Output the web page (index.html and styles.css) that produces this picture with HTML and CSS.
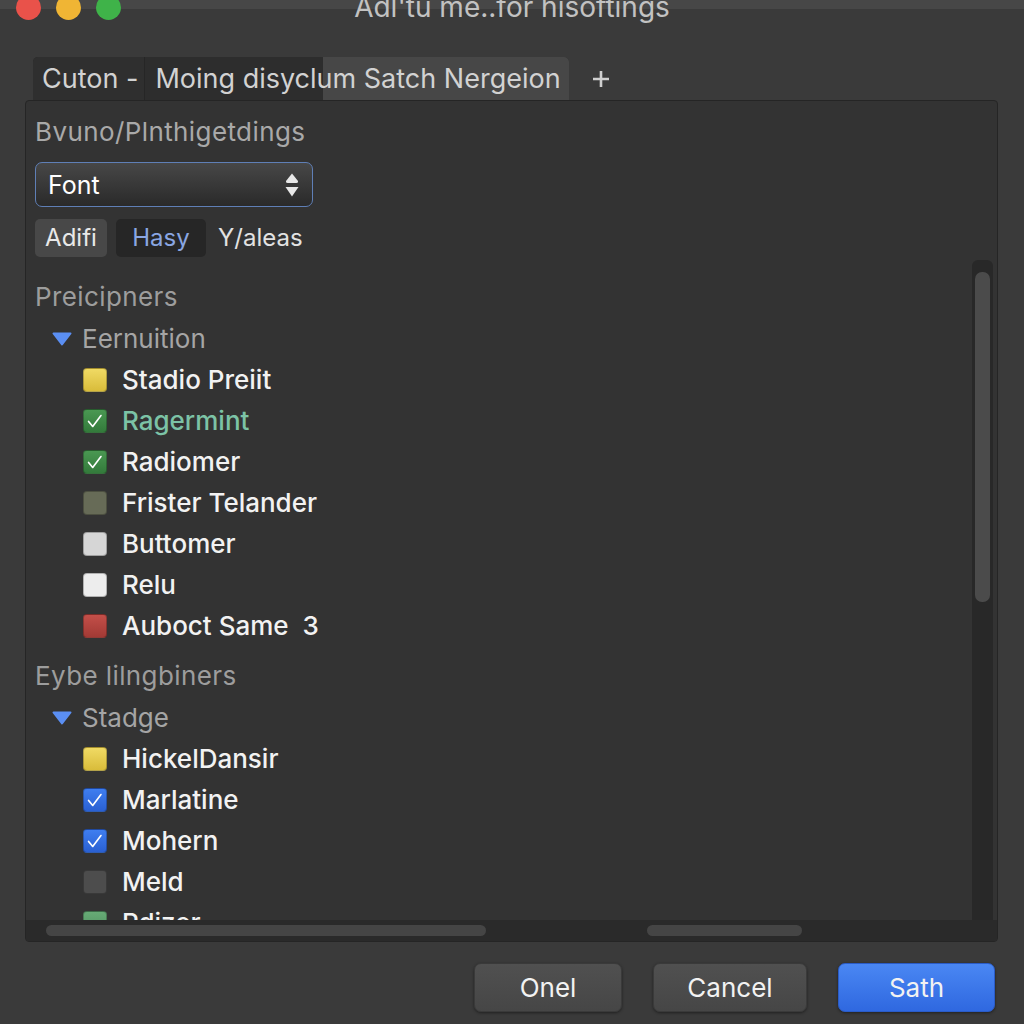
FILE: index.html
```html
<!DOCTYPE html>
<html lang="en">
<head>
  <meta charset="UTF-8" />
  <meta name="viewport" content="width=device-width, initial-scale=1" />
  <title>Settings</title>
  <link rel="stylesheet" href="styles.css">
</head>
<body>
<div class="window">

  <header class="titlebar">
    <div class="lights">
      <span class="light red"></span>
      <span class="light yellow"></span>
      <span class="light green"></span>
    </div>
    <div class="title">Adl'tu me..for hisoftings</div>
    <div></div>
  </header>

  <nav class="tabs">
    <div class="tab-group">
      <div class="tab">Cuton -</div>
      <div class="tab split">Moing disyclum Satch Nergeion</div>
    </div>
    <button class="add-tab" aria-label="New tab">
      <svg width="20" height="20" viewBox="0 0 20 20"><path d="M10 2v16M2 10h16" stroke="#cfcfcf" stroke-width="2.6"/></svg>
    </button>
  </nav>

  <section class="panel">
    <div class="panel-body">
      <h2 class="group-title">Bvuno/Plnthigetdings</h2>

      <div class="select">
        <span>Font</span>
        <svg width="16" height="26" viewBox="0 0 16 26">
          <path d="M8 1.5 L14 9 Q14.5 11 12.5 11 L3.5 11 Q1.5 11 2 9 Z" fill="#e8e8e8"/>
          <path d="M1.5 15 L14.5 15 L8 24.5 Z" fill="#e8e8e8"/>
        </svg>
      </div>

      <div class="segments">
        <span class="seg seg-on">Adifi</span>
        <span class="seg seg-dark">Hasy</span>
        <span class="seg seg-plain">Y/aleas</span>
      </div>

      <div class="list-area">
        <div class="list">
          <div class="section-title">Preicipners</div>
          <div class="tree-row">
            <svg width="20" height="14" viewBox="0 0 20 14"><polygon points="1.5,1.5 18.5,1.5 10,12.5" fill="#5b8ff3" stroke="#5b8ff3" stroke-width="2" stroke-linejoin="round"/></svg>
            <span>Eernuition</span>
          </div>
          <div class="item"><span class="box yellow"></span>Stadio Preiit</div>
          <div class="item mint"><span class="box green"><svg viewBox="0 0 24 24"><path d="M5 12.5l4.5 5.5 9-12"/></svg></span>Ragermint</div>
          <div class="item"><span class="box green"><svg viewBox="0 0 24 24"><path d="M5 12.5l4.5 5.5 9-12"/></svg></span>Radiomer</div>
          <div class="item"><span class="box olive"></span>Frister Telander</div>
          <div class="item"><span class="box light"></span>Buttomer</div>
          <div class="item"><span class="box white"></span>Relu</div>
          <div class="item"><span class="box red"></span>Auboct Same&nbsp; 3</div>

          <div class="section-title second">Eybe lilngbiners</div>
          <div class="tree-row">
            <svg width="20" height="14" viewBox="0 0 20 14"><polygon points="1.5,1.5 18.5,1.5 10,12.5" fill="#5b8ff3" stroke="#5b8ff3" stroke-width="2" stroke-linejoin="round"/></svg>
            <span>Stadge</span>
          </div>
          <div class="item"><span class="box yellow"></span>HickelDansir</div>
          <div class="item"><span class="box blue"><svg viewBox="0 0 24 24"><path d="M5 12.5l4.5 5.5 9-12"/></svg></span>Marlatine</div>
          <div class="item"><span class="box blue"><svg viewBox="0 0 24 24"><path d="M5 12.5l4.5 5.5 9-12"/></svg></span>Mohern</div>
          <div class="item"><span class="box dark"></span>Meld</div>
          <div class="item"><span class="box leaf"></span>Rdizer</div>
        </div>
        <div class="vscroll"><div class="vthumb"></div></div>
      </div>
    </div>

    <div class="hscroll">
      <div class="hthumb first"></div>
      <div class="hthumb second"></div>
    </div>
  </section>

  <footer class="actions">
    <button class="btn btn-one">Onel</button>
    <button class="btn btn-cancel">Cancel</button>
    <button class="btn btn-primary">Sath</button>
  </footer>

</div>
</body>
</html>
```

FILE: styles.css
```css
body {
  margin: 0;
  background: linear-gradient(#474747 0, #474747 9px, #3a3a3a 9px);
  color: #f0f0f0;
  font-family: 'Inter', 'Noto Sans', sans-serif;
}

.window {
  height: 1024px;
  overflow: hidden;
}

/* title bar */
.titlebar {
  display: grid;
  grid-template-columns: 1fr auto 1fr;
  align-items: center;
  height: 26px;
  margin-top: -6px;
}

.lights {
  display: flex;
  gap: 15px;
  padding-left: 16px;
}

.light {
  width: 25px;
  height: 25px;
  border-radius: 50%;
}

.light.red { background: #e9524a; }
.light.yellow { background: #f0b534; }
.light.green { background: #3fb349; }

.title {
  margin-top: 0;
  font-size: 28px;
  line-height: 26px;
  color: #c2c2c2;
}

/* tabs */
.tabs {
  display: flex;
  align-items: center;
  margin: 37px 0 0 33px;
  height: 43px;
}

.tab-group {
  display: flex;
  height: 43px;
  border-radius: 5px 5px 0 0;
  overflow: hidden;
  box-shadow: inset 0 1px 0 #262626;
}

.tab {
  padding: 0 6px 0 9px;
  font-size: 27px;
  line-height: 43px;
  color: #d2d2d2;
  background: #2f2f2f;
  border-right: 1px solid #262626;
}

.tab.split {
  padding: 0 8px 0 10px;
  background: linear-gradient(to right, #2d2d2d 178px, #474747 178px);
  border-right: none;
}

.add-tab {
  display: flex;
  background: none;
  border: none;
  padding: 0;
  margin-left: 22px;
}

/* main panel */
.panel {
  margin: 0 26px 0 25px;
  height: 840px;
  background: #333333;
  border: 1px solid #252525;
  border-radius: 4px;
  display: flex;
  flex-direction: column;
  overflow: hidden;
}

.panel-body {
  flex: 1;
  display: flex;
  flex-direction: column;
  padding: 13px 4px 0 9px;
  min-height: 0;
}

.group-title {
  margin: 0;
  font-size: 26px;
  font-weight: 400;
  letter-spacing: 0.4px;
  line-height: 36px;
  color: #a9a9a9;
}

.select {
  margin-top: 12px;
  width: 278px;
  height: 45px;
  box-sizing: border-box;
  display: flex;
  align-items: center;
  justify-content: space-between;
  padding: 0 12px 0 12px;
  border: 1.5px solid #5f7fb6;
  border-radius: 7px;
  background: linear-gradient(#474747, #2a2a2a);
  font-size: 25px;
  color: #ffffff;
}

.segments {
  display: flex;
  align-items: center;
  gap: 9px;
  margin-top: 12px;
  height: 38px;
}

.seg {
  height: 38px;
  line-height: 38px;
  font-size: 24px;
  border-radius: 5px;
}

.seg-on {
  width: 72px;
  text-align: center;
  background: #484848;
  color: #e8e8e8;
}

.seg-dark {
  width: 90px;
  text-align: center;
  background: #262626;
  color: #8aa6e2;
}

.seg-plain {
  margin-left: 3px;
  color: #e2e2e2;
}

/* scrolling list */
.list-area {
  flex: 1;
  display: flex;
  margin-top: 1px;
  min-height: 0;
}

.list {
  flex: 1;
  padding-top: 18px;
  overflow: hidden;
}

.section-title {
  font-size: 26px;
  letter-spacing: 0.4px;
  line-height: 42px;
  color: #9d9d9d;
}

.section-title.second {
  margin-top: 9px;
}

.tree-row {
  display: flex;
  align-items: center;
  gap: 10px;
  height: 41px;
  padding-left: 17px;
  font-size: 26px;
  color: #a5a5a5;
}

.item {
  display: flex;
  align-items: center;
  gap: 15px;
  height: 41px;
  padding-left: 48px;
  font-size: 26px;
  font-weight: 500;
  color: #f2f2f2;
}

.item.mint {
  color: #7cc3a6;
}

.box {
  width: 24px;
  height: 24px;
  box-sizing: border-box;
  border-radius: 4px;
  border: 1px solid rgba(0,0,0,0.25);
  display: flex;
  flex-shrink: 0;
}

.box svg {
  width: 22px;
  height: 22px;
  fill: none;
  stroke: #ffffff;
  stroke-width: 1.8;
  stroke-linecap: round;
  stroke-linejoin: round;
}

.box.yellow { background: linear-gradient(#f0da64, #d9bc3a); }
.box.green { background: linear-gradient(#4a9852, #337a3b); }
.box.olive { background: #676b57; }
.box.light { background: #d6d6d6; }
.box.white { background: #ededed; }
.box.red { background: linear-gradient(#c34f49, #a23a35); }
.box.blue { background: linear-gradient(#3f7ef0, #2a60d2); }
.box.dark { background: #4d4d4d; }
.box.leaf { background: linear-gradient(#67ab76, #4f8f5f); }

.vscroll {
  width: 21px;
  margin-top: 2px;
  background: #282828;
  border-radius: 6px 6px 0 0;
  padding: 12px 3px 0 3px;
  box-sizing: border-box;
}

.vthumb {
  height: 330px;
  border-radius: 7px;
  background: #4b4b4b;
}

.hscroll {
  display: flex;
  height: 21px;
  padding-top: 5px;
  box-sizing: border-box;
  background: #2a2a2a;
}

.hthumb {
  height: 11px;
  border-radius: 6px;
  background: #454545;
}

.hthumb.first {
  margin-left: 20px;
  width: 440px;
}

.hthumb.second {
  margin-left: 161px;
  width: 155px;
}

/* footer buttons */
.actions {
  display: flex;
  justify-content: flex-end;
  gap: 31px;
  margin-top: 21px;
  padding-right: 29px;
}

.btn {
  height: 49px;
  border: 1px solid #3a3a3a;
  border-radius: 7px;
  background: linear-gradient(#505050, #464646);
  box-shadow: 0 1px 3px rgba(0,0,0,0.45);
  color: #f2f2f2;
  font-family: 'Inter', 'Noto Sans', sans-serif;
  font-size: 26px;
  padding: 0;
  cursor: pointer;
}

.btn-one { width: 148px; }
.btn-cancel { width: 154px; }

.btn-primary {
  width: 157px;
  border-color: #2a5cc8;
  background: linear-gradient(#4a87f3, #2f68e0);
}
```
